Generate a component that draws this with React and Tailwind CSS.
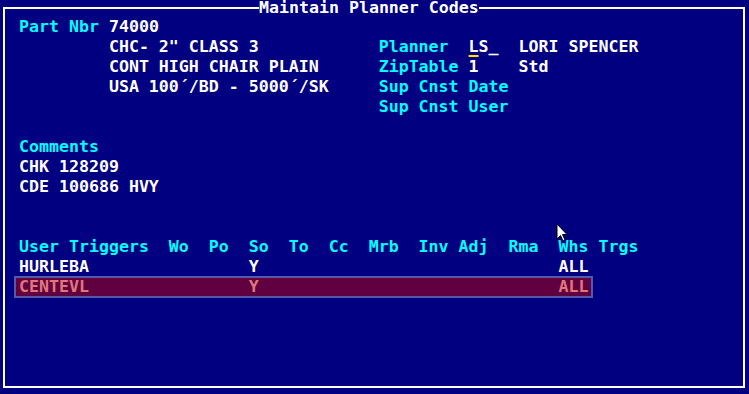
import React from 'react';

const C = 'text-[#00ffff]';
const W = 'text-white';

// each screen line is a list of [text, colour] segments on a 10px character grid
const lines = [
  [['Part Nbr ', C], ['74000', W]],
  [['         CHC- 2" CLASS 3            ', W], ['Planner  ', C], ['LS_', 'cursor'], ['  LORI SPENCER', W]],
  [['         CONT HIGH CHAIR PLAIN      ', W], ['ZipTable ', C], ['1    Std', W]],
  [['         USA 100´/BD - 5000´/SK     ', W], ['Sup Cnst Date', C]],
  [['                                    ', W], ['Sup Cnst User', C]],
  [],
  [['Comments', C]],
  [['CHK 128209', W]],
  [['CDE 100686 HVY', W]],
  [],
  [],
  [['User Triggers  Wo  Po  So  To  Cc  Mrb  Inv Adj  Rma  Whs Trgs', C]],
  [['HURLEBA                Y                              ALL', W]],
];

function Segment({ text, color }) {
  if (color === 'cursor') {
    return (
      <span className="text-white">
        <span className="underline decoration-[#ffe000] decoration-2 underline-offset-[3px]">L</span>S_
      </span>
    );
  }
  return <span className={color}>{text}</span>;
}

function Line({ segments }) {
  return (
    <div className="h-5 leading-5 whitespace-pre">
      {segments.map(([text, color], i) => (
        <Segment key={i} text={text} color={color} />
      ))}
    </div>
  );
}

function Pointer() {
  return (
    <svg className="absolute left-[556px] top-[223px]" width="13" height="20" viewBox="0 0 13 20">
      <path d="M1 1 L1 16 L4.5 12.5 L7 18 L9 17 L6.5 11.5 L11 11.5 Z" fill="#ffffff" stroke="#000000" strokeWidth="1" />
    </svg>
  );
}

export default function App() {
  return (
    <div
      className="relative w-[749px] h-[394px] bg-[#000080] pt-[7px] pl-[3px] font-bold text-[16.6px] overflow-hidden"
      style={{ fontFamily: '"DejaVu Sans Mono", "Liberation Mono", monospace' }}
    >
      <div className="w-[742px] h-[381px] border-2 border-white pt-[8px] pl-[14px]">
        {lines.map((segs, i) => (
          <Line key={i} segments={segs} />
        ))}
        <div className="ml-[-5px] my-[-1px] w-[579px] h-[22px] border-2 border-[#5858a8] bg-[#600040] pl-[3px] leading-[18px] whitespace-pre text-[#e07878]">
          {'CENTEVL                Y                              ALL'}
        </div>
      </div>
      <div className="absolute left-[259px] top-0 h-[15px] leading-[15px] bg-[#000080] text-white whitespace-pre">
        Maintain Planner Codes
      </div>
      <Pointer />
    </div>
  );
}
